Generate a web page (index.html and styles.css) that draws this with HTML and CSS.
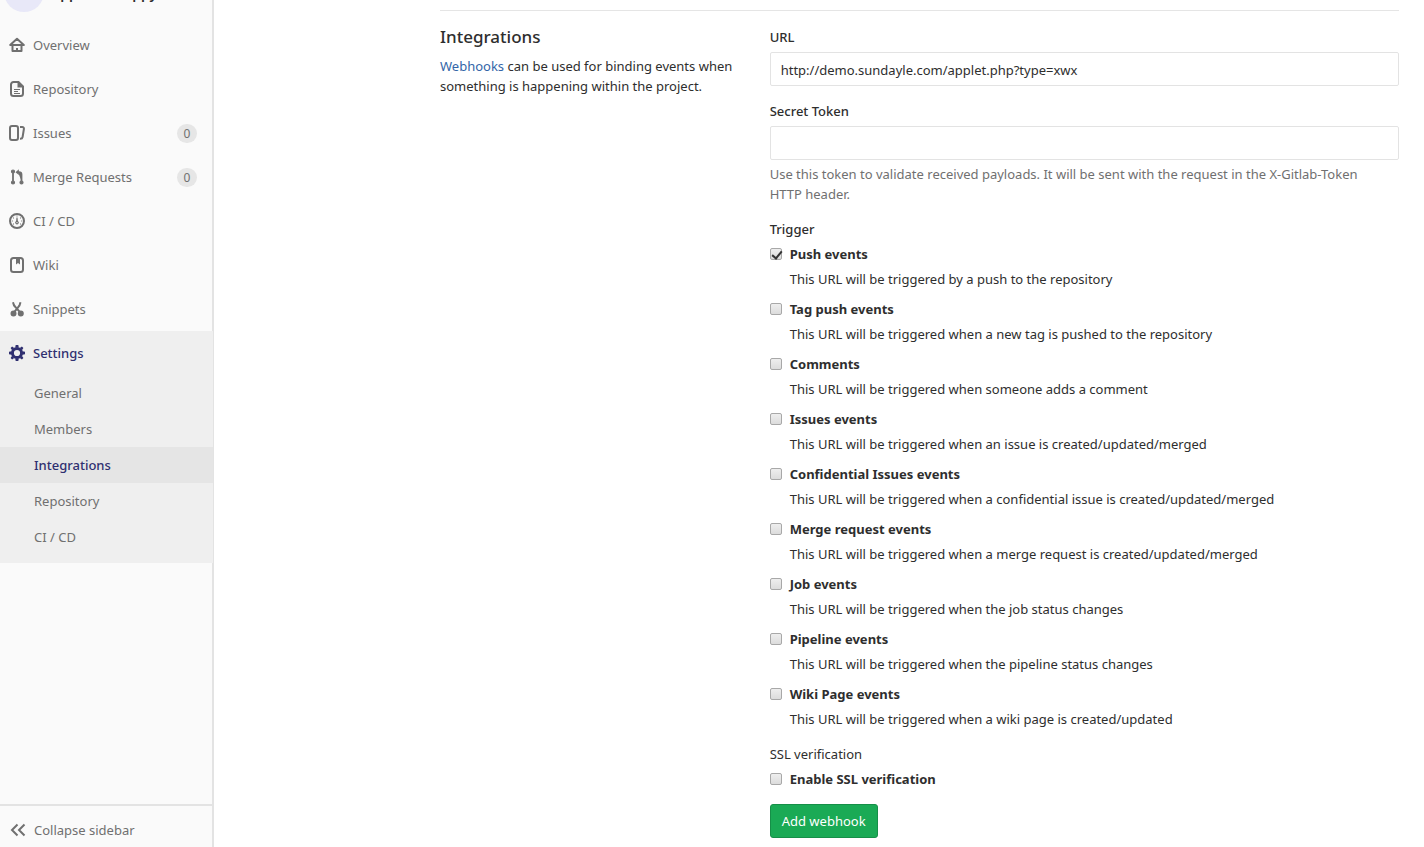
FILE: index.html
```html
<!DOCTYPE html>
<html lang="en">
<head>
<meta charset="utf-8">
<title>Integrations</title>
<link rel="stylesheet" href="styles.css">
</head>
<body>
<div class="page">
  <aside class="sidebar">
    <div class="context"><div class="context-row"><span class="avatar"></span><strong class="project">applet-wx-appy</strong></div></div>
    <nav class="nav">
      <a class="item" href="#"><svg class="icon" viewBox="0 0 16 16"><path d="M1.200 8 8 1.800 14.800 8z" fill="none" stroke="currentColor" stroke-width="2" stroke-linejoin="round"/><path d="M3.500 8v6h9V8" fill="none" stroke="currentColor" stroke-width="2" stroke-linejoin="round"/><path d="M7 11h2v3H7z"/></svg><span class="label">Overview</span></a>
      <a class="item" href="#"><svg class="icon" viewBox="0 0 16 16"><path d="M4.500 1H9.500L14 5.500V12.500a2.500 2.500 0 0 1-2.500 2.500h-7A2.500 2.500 0 0 1 2 12.500v-9A2.500 2.500 0 0 1 4.500 1z" fill="none" stroke="currentColor" stroke-width="2"/><path d="M8.500 1v5.500H14V5L10 1zM5 8h6v1H5zM5 10h4v1H5zM5 12h6v1H5z"/></svg><span class="label">Repository</span></a>
      <a class="item" href="#"><svg class="icon" viewBox="0 0 16 16"><rect x="1" y="1" width="8" height="14" rx="2" fill="none" stroke="currentColor" stroke-width="2"/><path d="M11 2h2.200c1.300 0 1.900.8 1.700 2l-1.300 8c-.2 1.200-.8 1.800-2.100 1.800H11" fill="none" stroke="currentColor" stroke-width="2"/></svg><span class="label">Issues</span><span class="badge">0</span></a>
      <a class="item" href="#"><svg class="icon" viewBox="0 0 16 16" fill="none" stroke="currentColor"><circle cx="4" cy="2.500" r="1.500" stroke-width="1.200"/><circle cx="4" cy="13.500" r="1.500" stroke-width="1.200"/><circle cx="12.500" cy="13.500" r="1.500" stroke-width="1.200"/><path d="M4 4v8M12.500 12V5.500c0-1.500-.8-2.300-2.500-2.300H9" stroke-width="1.800"/><path d="M6.500 3.200 9.800.3v5.800z" fill="currentColor" stroke="none"/></svg><span class="label">Merge Requests</span><span class="badge">0</span></a>
      <a class="item" href="#"><svg class="icon" viewBox="0 0 16 16"><circle cx="8" cy="8" r="7" fill="none" stroke="currentColor" stroke-width="2"/><path d="M7.500 4.500h1l.4 3.500a1.800 1.800 0 1 1-1.800 0zM7.500 2.500h1v1h-1zM4 4.500h1v1H4zM11 4.500h1v1h-1zM2.800 7.500h1v1h-1zM12.200 7.500h1v1h-1zM4 10.500h1v1H4zM11 10.500h1v1h-1z"/><circle cx="8" cy="9.600" r=".7" fill="#fafafa"/></svg><span class="label">CI / CD</span></a>
      <a class="item" href="#"><svg class="icon" viewBox="0 0 16 16"><rect x="2" y="1" width="12" height="14" rx="2.500" fill="none" stroke="currentColor" stroke-width="2"/><path d="M7 1h4v6.500L9 6 7 7.500z"/></svg><span class="label">Wiki</span></a>
      <a class="item" href="#"><svg class="icon" viewBox="0 0 16 16" fill="none" stroke="currentColor" stroke-width="2"><circle cx="4.500" cy="12.500" r="2"/><circle cx="11.800" cy="12.500" r="2"/><path d="M4 1.200 5 4.500l5.500 6.200M11.500 1.200l-1 3.300-4.900 6.200"/></svg><span class="label">Snippets</span></a>
      <div class="group">
        <a class="item active" href="#"><svg class="icon" viewBox="0 0 16 16"><circle cx="8" cy="8" r="4.600" fill="none" stroke="currentColor" stroke-width="3"/><path d="M6.200 2.500 6.700 0h2.600l.5 2.500zM6.200 13.500l.5 2.500h2.600l.5-2.500zM13.500 6.200l2.500.5v2.600l-2.500.5zM2.500 6.200 0 6.700v2.600l2.500.5zM10.800 3.100l2.100-1.500 1.500 1.500-1.500 2.100zM5.200 3.100 3.100 1.600 1.600 3.100l1.500 2.100zM10.800 12.900l2.100 1.500 1.500-1.500-1.500-2.100zM5.200 12.900l-2.100 1.500-1.500-1.500 1.500-2.100z"/></svg><span class="label">Settings</span></a>
        <a class="sub" href="#">General</a>
        <a class="sub" href="#">Members</a>
        <a class="sub current" href="#">Integrations</a>
        <a class="sub" href="#">Repository</a>
        <a class="sub" href="#">CI / CD</a>
      </div>
    </nav>
    <button class="collapse" type="button"><svg class="icon" viewBox="0 0 16 16"><path d="M7.500 2.500 2 8l5.500 5.500M14.500 2.500 9 8l5.500 5.500" fill="none" stroke="currentColor" stroke-width="2"/></svg><span>Collapse sidebar</span></button>
  </aside>
  <main class="main">
    <hr class="rule">
    <div class="row">
      <section class="column">
        <h4 class="heading">Integrations</h4>
        <p class="text"><a class="link" href="#">Webhooks</a> can be used for binding events when something is happening within the project.</p>
      </section>
      <form class="column">
        <div class="field">
          <label class="field-label" for="url">URL</label>
          <input class="control" id="url" type="text" value="http://demo.sundayle.com/applet.php?type=xwx">
        </div>
        <div class="field">
          <label class="field-label" for="token">Secret Token</label>
          <input class="control" id="token" type="text">
          <p class="help">Use this token to validate received payloads. It will be sent with the request in the X-Gitlab-Token HTTP header.</p>
        </div>
        <fieldset class="events">
          <legend class="legend medium">Trigger</legend>
          <div class="event"><input class="check" type="checkbox" id="push" checked><label class="name" for="push">Push events</label><p class="desc">This URL will be triggered by a push to the repository</p></div>
          <div class="event"><input class="check" type="checkbox" id="tag"><label class="name" for="tag">Tag push events</label><p class="desc">This URL will be triggered when a new tag is pushed to the repository</p></div>
          <div class="event"><input class="check" type="checkbox" id="comments"><label class="name" for="comments">Comments</label><p class="desc">This URL will be triggered when someone adds a comment</p></div>
          <div class="event"><input class="check" type="checkbox" id="issues"><label class="name" for="issues">Issues events</label><p class="desc">This URL will be triggered when an issue is created/updated/merged</p></div>
          <div class="event"><input class="check" type="checkbox" id="confidential"><label class="name" for="confidential">Confidential Issues events</label><p class="desc">This URL will be triggered when a confidential issue is created/updated/merged</p></div>
          <div class="event"><input class="check" type="checkbox" id="merge"><label class="name" for="merge">Merge request events</label><p class="desc">This URL will be triggered when a merge request is created/updated/merged</p></div>
          <div class="event"><input class="check" type="checkbox" id="job"><label class="name" for="job">Job events</label><p class="desc">This URL will be triggered when the job status changes</p></div>
          <div class="event"><input class="check" type="checkbox" id="pipeline"><label class="name" for="pipeline">Pipeline events</label><p class="desc">This URL will be triggered when the pipeline status changes</p></div>
          <div class="event"><input class="check" type="checkbox" id="wiki"><label class="name" for="wiki">Wiki Page events</label><p class="desc">This URL will be triggered when a wiki page is created/updated</p></div>
        </fieldset>
        <fieldset class="events">
          <legend class="legend">SSL verification</legend>
          <div class="event"><input class="check" type="checkbox" id="ssl"><label class="name" for="ssl">Enable SSL verification</label></div>
        </fieldset>
        <button class="submit" type="submit">Add webhook</button>
      </form>
    </div>
  </main>
</div>
</body>
</html>
```
FILE: styles.css
```css
* { box-sizing: border-box; }
body {
  margin: 0;
  font: 13px/20px "Noto Sans", "Open Sans", sans-serif;
  color: #2e2e2e;
  background: #fff;
}
p, h4 { margin: 0; }
a { text-decoration: none; }
button, input { font: inherit; }

.page { display: flex; height: 100vh; overflow: hidden; }

.sidebar {
  flex: 0 0 214px;
  display: flex;
  flex-direction: column;
  background: #fafafa;
  border-right: 2px solid #e3e3e3;
  color: #707070;
}
/* The project header is scrolled mostly out of view. */
.context {
  height: 23px;
  padding: 0 4px 11px;
  display: flex;
  align-items: flex-end;
  overflow: hidden;
}
.context-row { display: flex; align-items: center; gap: 8px; }
.avatar { flex: 0 0 40px; height: 40px; border-radius: 50%; background: #e8e8f8; }
.project { padding-top: 4px; font-size: 14px; font-weight: 600; color: #2e2e2e; }
.nav { flex: 1; }
.item {
  display: flex;
  align-items: center;
  gap: 8px;
  height: 44px;
  padding: 0 15px 0 9px;
  color: #707070;
}
.icon { flex: none; width: 16px; height: 16px; fill: currentColor; }
.label { flex: 1; }
.badge {
  min-width: 20px;
  padding: 0 6px;
  border-radius: 10px;
  background: #e6e6e6;
  font-size: 12px;
  line-height: 19px;
  text-align: center;
}
.group { padding-bottom: 8px; margin-right: -1px; background: #efefef; }
.active { color: #2f2f70; font-weight: 500; }
.sub { display: block; padding: 8px 34px; color: #707070; }
.current { background: #e5e5e5; color: #2f2f70; font-weight: 500; }
.collapse {
  display: flex;
  align-items: center;
  gap: 8px;
  padding: 14px 10px 7px;
  border: 0;
  border-top: 2px solid #e3e3e3;
  background: none;
  color: #707070;
}

.main { flex: 1; padding: 10px 25px 0 226px; }
.rule { margin: 0 0 16px; border: 0; border-top: 1px solid #e5e5e5; }
.row { display: grid; grid-template-columns: 1fr 2fr; margin: 0 -15px; }
.column { padding: 0 15px; }
.heading { margin-bottom: 9px; font-size: 17px; font-weight: 500; }
.link { color: #3366a8; }
.field { margin-bottom: 15px; }
.field-label { display: block; margin-bottom: 5px; font-weight: 500; }
.control {
  display: block;
  width: 100%;
  height: 34px;
  padding: 7px 10px 5px;
  border: 1px solid #e3e3e3;
  border-radius: 2px;
  background: #fff;
  color: #2e2e2e;
}
.help { margin-top: 4px; padding-right: 15px; color: #707070; }
.events { margin: 0 0 15px; padding: 0; border: 0; }
.legend { padding: 0; margin-bottom: 5px; }
.medium { font-weight: 500; }
.event {
  display: grid;
  grid-template-columns: 12px 1fr;
  gap: 5px 8px;
  align-items: center;
}
.event + .event { margin-top: 10px; }
.name { font-weight: 700; }
.desc { grid-column: 2; }
.check {
  appearance: none;
  width: 12px;
  height: 12px;
  margin: 0;
  border: 1px solid #a8a8a8;
  border-radius: 2px;
  background: linear-gradient(#eee, #dcdcdc);
}
.check:checked::before {
  content: "";
  display: block;
  width: 4px;
  height: 8px;
  margin: 0 0 0 3px;
  border: solid #333;
  border-width: 0 2px 2px 0;
  transform: rotate(40deg);
}
.submit {
  padding: 6px 11px;
  border: 1px solid #168f48;
  border-radius: 3px;
  background: #1aaa55;
  color: #fff;
}
```
